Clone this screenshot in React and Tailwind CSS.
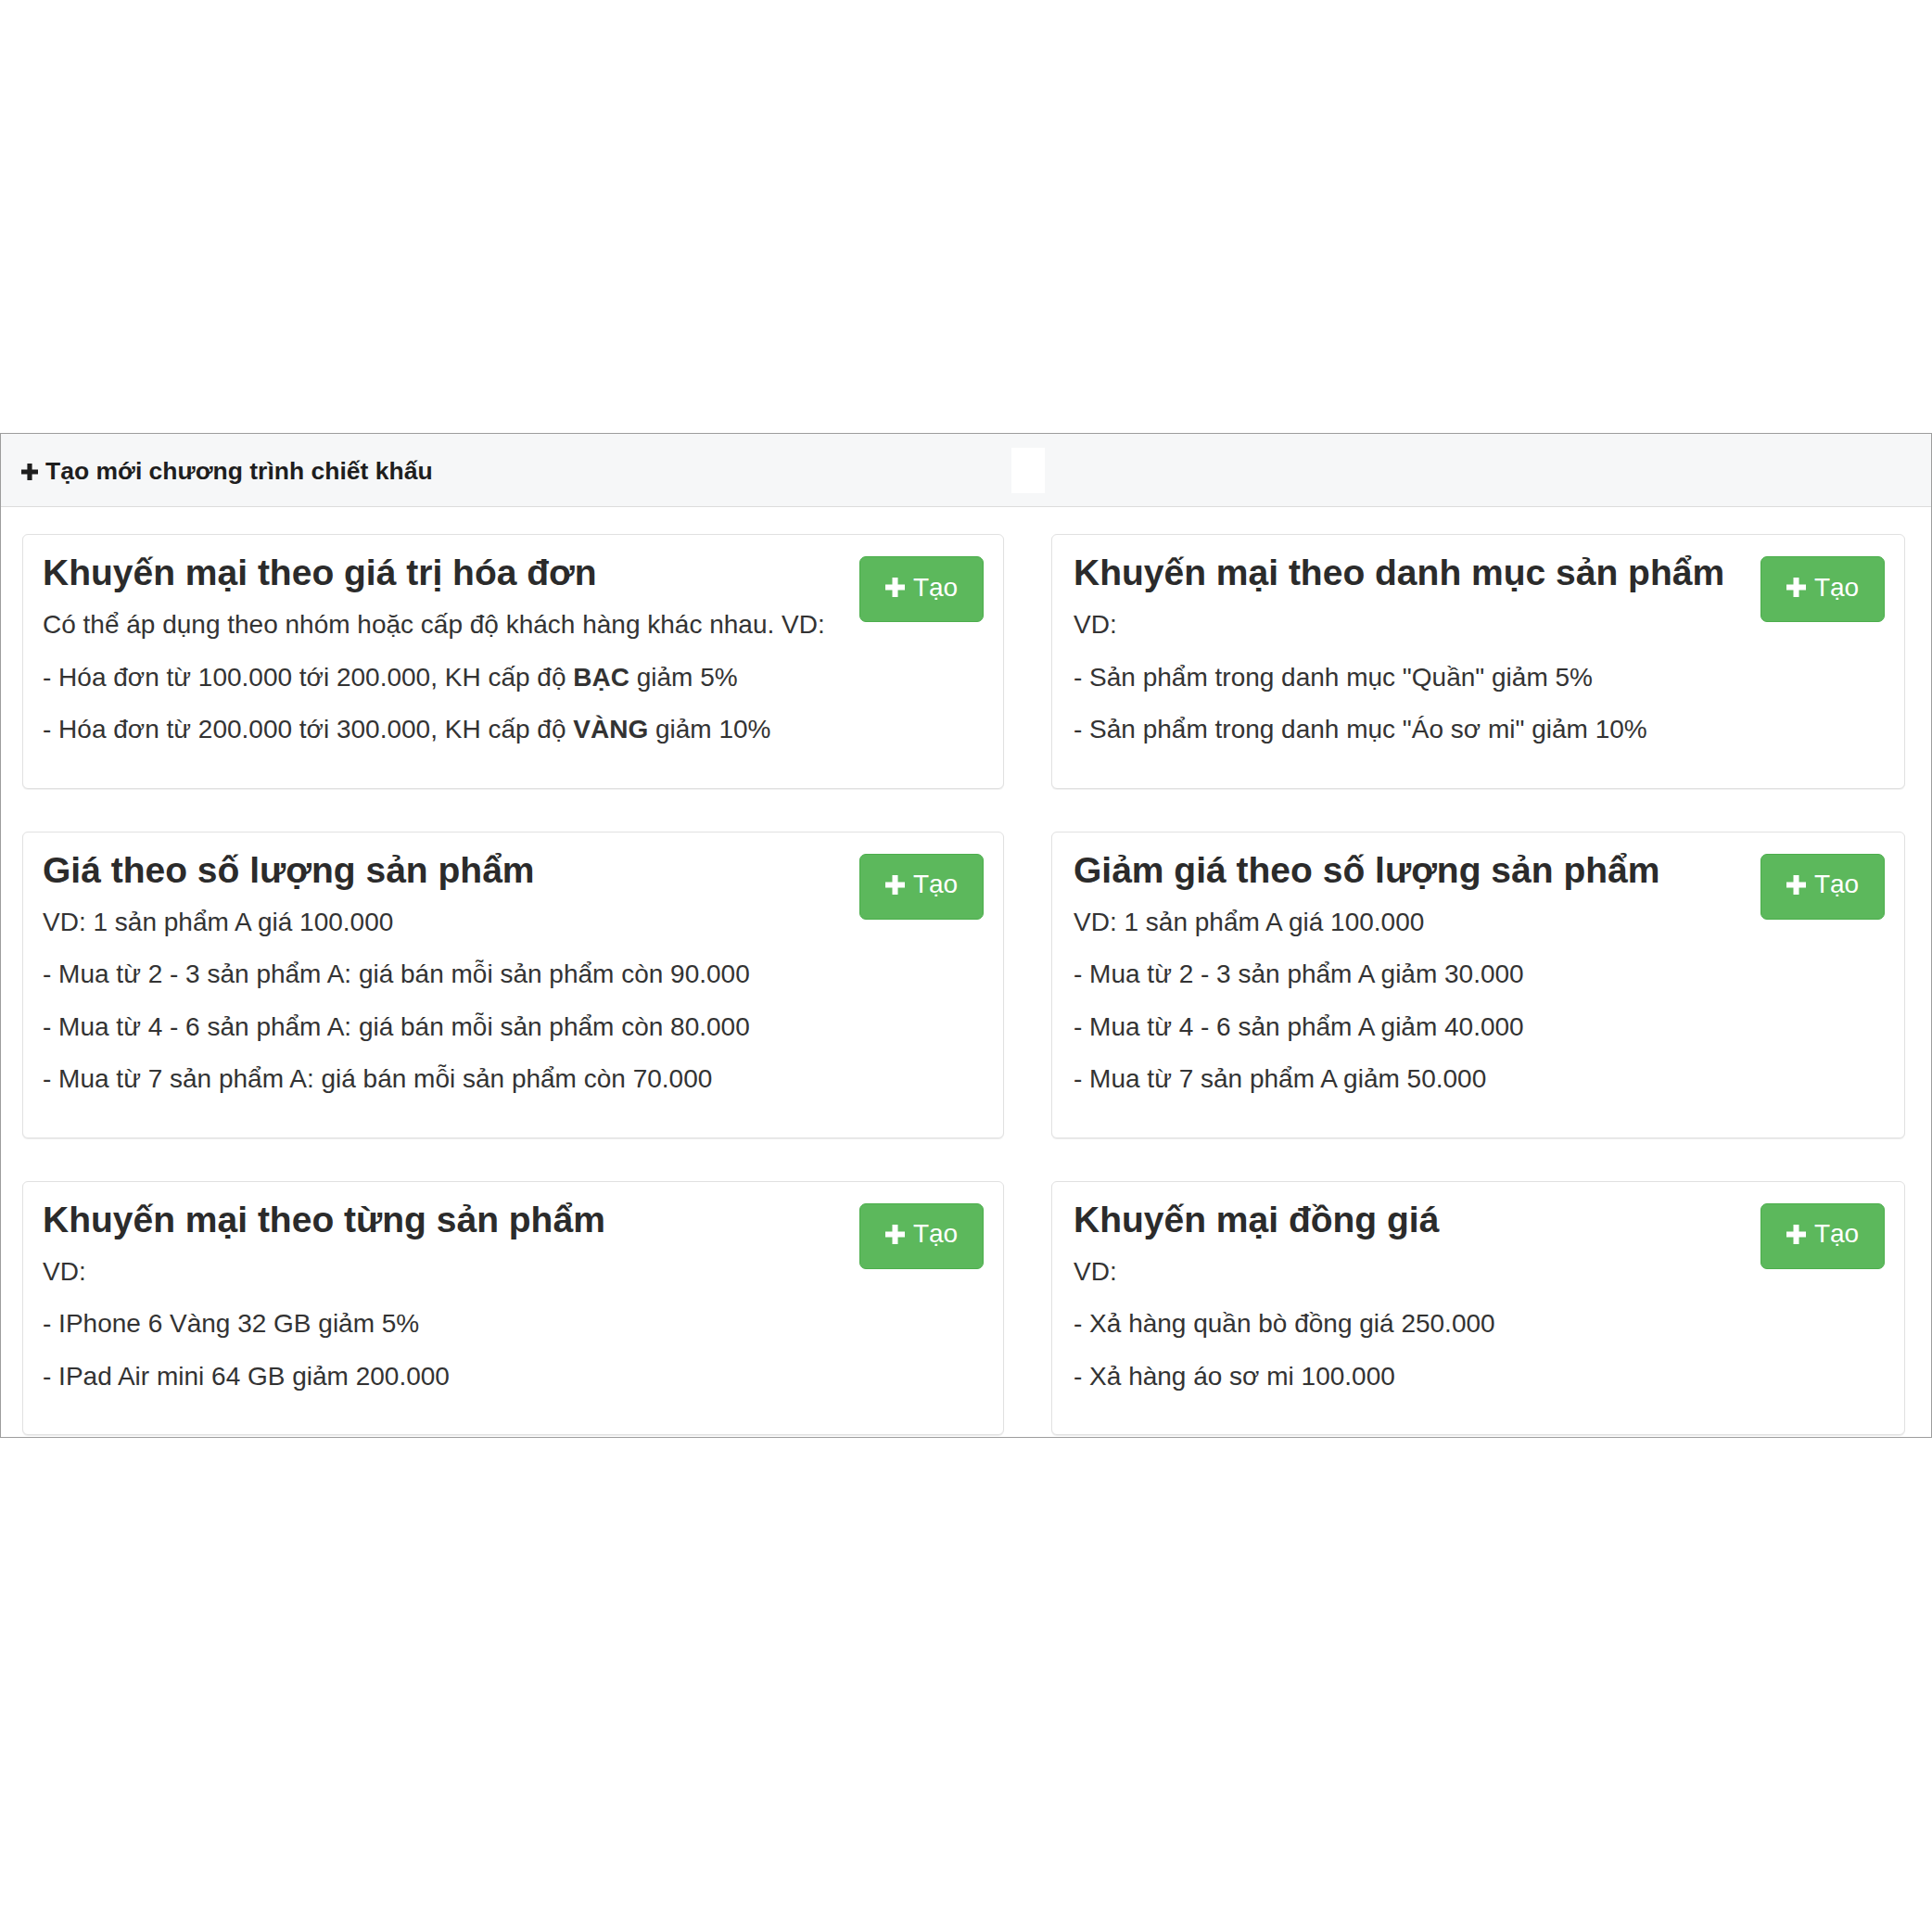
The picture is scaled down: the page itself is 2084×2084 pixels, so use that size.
import React from "react";

function Plus({ className }) {
  return (
    <svg viewBox="0 0 14 14" className={className} aria-hidden="true">
      <path d="M5 0h4v5h5v4H9v5H5V9H0V5h5z" fill="currentColor" />
    </svg>
  );
}

const cards = [
  {
    title: "Khuyến mại theo giá trị hóa đơn",
    lines: [
      "Có thể áp dụng theo nhóm hoặc cấp độ khách hàng khác nhau. VD:",
      <>- Hóa đơn từ 100.000 tới 200.000, KH cấp độ <b className="font-bold">BẠC</b> giảm 5%</>,
      <>- Hóa đơn từ 200.000 tới 300.000, KH cấp độ <b className="font-bold">VÀNG</b> giảm 10%</>,
    ],
  },
  {
    title: "Khuyến mại theo danh mục sản phẩm",
    lines: [
      "VD:",
      '- Sản phẩm trong danh mục "Quần" giảm 5%',
      '- Sản phẩm trong danh mục "Áo sơ mi" giảm 10%',
    ],
  },
  {
    title: "Giá theo số lượng sản phẩm",
    lines: [
      "VD: 1 sản phẩm A giá 100.000",
      "- Mua từ 2 - 3 sản phẩm A: giá bán mỗi sản phẩm còn 90.000",
      "- Mua từ 4 - 6 sản phẩm A: giá bán mỗi sản phẩm còn 80.000",
      "- Mua từ 7 sản phẩm A: giá bán mỗi sản phẩm còn 70.000",
    ],
  },
  {
    title: "Giảm giá theo số lượng sản phẩm",
    lines: [
      "VD: 1 sản phẩm A giá 100.000",
      "- Mua từ 2 - 3 sản phẩm A giảm 30.000",
      "- Mua từ 4 - 6 sản phẩm A giảm 40.000",
      "- Mua từ 7 sản phẩm A giảm 50.000",
    ],
  },
  {
    title: "Khuyến mại theo từng sản phẩm",
    lines: ["VD:", "- IPhone 6 Vàng 32 GB giảm 5%", "- IPad Air mini 64 GB giảm 200.000"],
  },
  {
    title: "Khuyến mại đồng giá",
    lines: ["VD:", "- Xả hàng quần bò đồng giá 250.000", "- Xả hàng áo sơ mi 100.000"],
  },
];

function Card({ title, lines, right }) {
  return (
    <div
      className={`flex items-start rounded-[6px] border border-[#e1e1e1] bg-white pt-[19px] pr-[21px] pb-[34px] shadow-[0_1px_1px_rgba(0,0,0,0.07)] ${
        right ? "pl-[23px]" : "pl-[21px]"
      }`}
    >
      <div className="min-w-0 flex-1">
        <h3 className="text-[39px] font-bold leading-[44px] text-[#2b2b2b] whitespace-nowrap">{title}</h3>
        <div className="mt-[6px]">
          {lines.map((l, i) => (
            <p key={i} className="text-[28px] leading-[56.5px] text-[#333333] whitespace-nowrap">
              {l}
            </p>
          ))}
        </div>
      </div>
      <button className="mt-[4px] flex h-[71px] w-[134px] flex-none items-center justify-center gap-[9px] rounded-[7px] border border-[#4cae4c] bg-[#5cb85c] pb-[4px] text-[28px] leading-none text-white">
        <Plus className="h-[21px] w-[21px]" />
        <span>Tạo</span>
      </button>
    </div>
  );
}

export default function App() {
  return (
    <div className="min-h-[2084px] bg-white pt-[467px] font-['Liberation_Sans',Arial,sans-serif]">
      <div className="border border-[#9d9d9d] bg-white">
        <div className="relative flex h-[79px] items-center gap-[8px] border-b border-[#dcdcdc] bg-[#f6f7f8] pl-[22px] pt-[4px]">
          <Plus className="h-[18px] w-[18px] text-[#1e1e1e]" />
          <span className="text-[26.5px] font-bold text-[#1e1e1e]">Tạo mới chương trình chiết khấu</span>
          <div className="absolute left-[1090px] top-[15px] h-[49px] w-[36px] bg-white" />
        </div>
        <div className="grid grid-cols-[1059px_921px] gap-x-[51px] gap-y-[46px] pl-[23px] pt-[29px] pb-[2px]">
          {cards.map((c, i) => (
            <Card key={i} {...c} right={i % 2 === 1} />
          ))}
        </div>
      </div>
    </div>
  );
}
